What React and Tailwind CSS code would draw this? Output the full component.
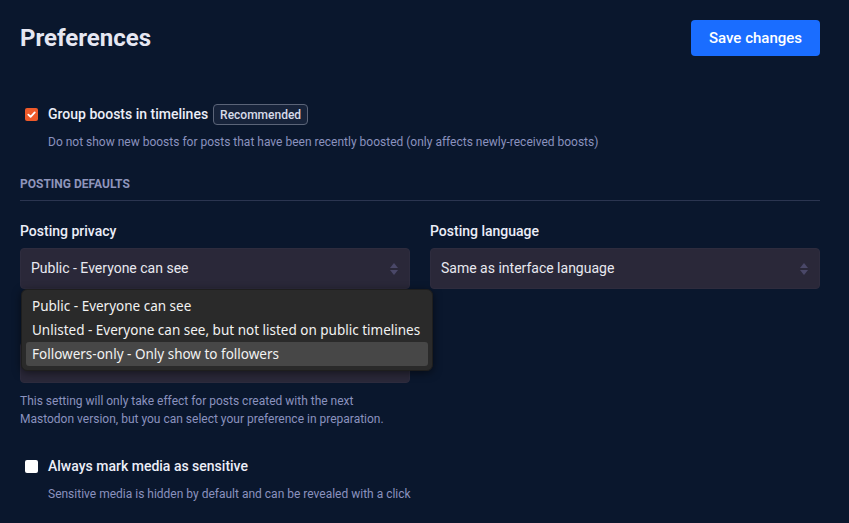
import React from "react";

function Arrows() {
  return (
    <svg width="10" height="14" viewBox="0 0 10 14" className="absolute right-[10px] top-1/2 -translate-y-1/2">
      <path d="M5 1 L9 6 L1 6 Z" fill="#4a4868" />
      <path d="M1 8 L9 8 L5 13 Z" fill="#4a4868" />
    </svg>
  );
}

function Select({ value }) {
  return (
    <div className="relative h-[41px] rounded-[4px] bg-[#2a2839] border border-[#2e2c3e] flex items-center px-[10px] text-[14px] text-[#e8e8f0]">
      <span>{value}</span>
      <Arrows />
    </div>
  );
}

export default function App() {
  return (
    <div className="w-[849px] h-[523px] overflow-hidden bg-[#0a172d] font-['Roboto',sans-serif] text-white">
      <div className="w-[800px] ml-5">
        <div className="flex items-center justify-between pt-5">
          <h1 className="text-[24px] font-bold text-[#e6e7f2] leading-none">Preferences</h1>
          <button className="h-9 px-[18px] rounded-[4px] bg-[#1a6dff] text-[15px] font-medium text-white">Save changes</button>
        </div>

        <div className="mt-[48px]">
          <div className="flex items-center h-[21px]">
            <div className="ml-[5px] w-[13px] h-[13px] rounded-[2px] bg-[#ee5a2a] flex items-center justify-center">
              <svg width="9" height="9" viewBox="0 0 10 10">
                <path d="M1.5 5.2 L4 7.6 L8.6 2.6" stroke="white" strokeWidth="2" fill="none" strokeLinecap="round" strokeLinejoin="round" />
              </svg>
            </div>
            <span className="ml-[10px] text-[14px] font-medium text-[#eceef8]">Group boosts in timelines</span>
            <span className="ml-[5px] h-[21px] px-[6px] flex items-center rounded-[4px] border border-[#5b6478] bg-[#17233a] text-[12px] font-medium text-[#d7dbe8]">Recommended</span>
          </div>
          <p className="ml-[28px] mt-[9px] text-[12px] leading-[16px] text-[#8a92bf]">Do not show new boosts for posts that have been recently boosted (only affects newly-received boosts)</p>
        </div>

        <div className="mt-[26px] text-[12px] font-bold uppercase text-[#8f95bb] leading-[16px]">Posting defaults</div>
        <div className="mt-[8px] h-px bg-[#2b3550]" />

        <div className="mt-[21px] grid grid-cols-2 gap-x-5">
          <div className="relative">
            <div className="text-[14px] font-medium text-[#eceef8] leading-[18px] mb-[8px]">Posting privacy</div>
            <Select value="Public - Everyone can see" />
            <div className="mt-[27px] pl-[4px] text-[14px] font-medium text-[#eceef8] leading-[18px] mb-[8px]">Who can quote</div>
            <Select value="Only you" />
            <p className="mt-[9px] text-[12px] leading-[18px] text-[#8a92bf]">
              This setting will only take effect for posts created with the next<br />Mastodon version, but you can select your preference in preparation.
            </p>

            <div className="absolute left-[1px] top-[67px] w-[412px] rounded-[6px] bg-[#2a2a2a] border border-[#1e1e1e] py-[4px] px-[4px] shadow-[0_2px_8px_rgba(0,0,0,0.5)] font-['Noto_Sans',sans-serif] text-[13.5px] text-[#f2f2f2]">
              <div className="h-[24px] flex items-center px-[6px]">Public - Everyone can see</div>
              <div className="h-[24px] flex items-center px-[6px] whitespace-nowrap">Unlisted - Everyone can see, but not listed on public timelines</div>
              <div className="h-[24px] flex items-center px-[6px] rounded-[3px] bg-[#474747]">Followers-only - Only show to followers</div>
            </div>
          </div>
          <div>
            <div className="text-[14px] font-medium text-[#eceef8] leading-[18px] mb-[8px]">Posting language</div>
            <Select value="Same as interface language" />
          </div>
        </div>

        <div className="mt-[28px] flex items-center">
          <div className="ml-[5px] w-[13px] h-[13px] rounded-[2px] bg-white" />
          <span className="ml-[10px] text-[14px] font-medium text-[#eceef8]">Always mark media as sensitive</span>
        </div>
        <p className="ml-[28px] mt-[9px] text-[12px] leading-[16px] text-[#8a92bf]">Sensitive media is hidden by default and can be revealed with a click</p>
      </div>
    </div>
  );
}
